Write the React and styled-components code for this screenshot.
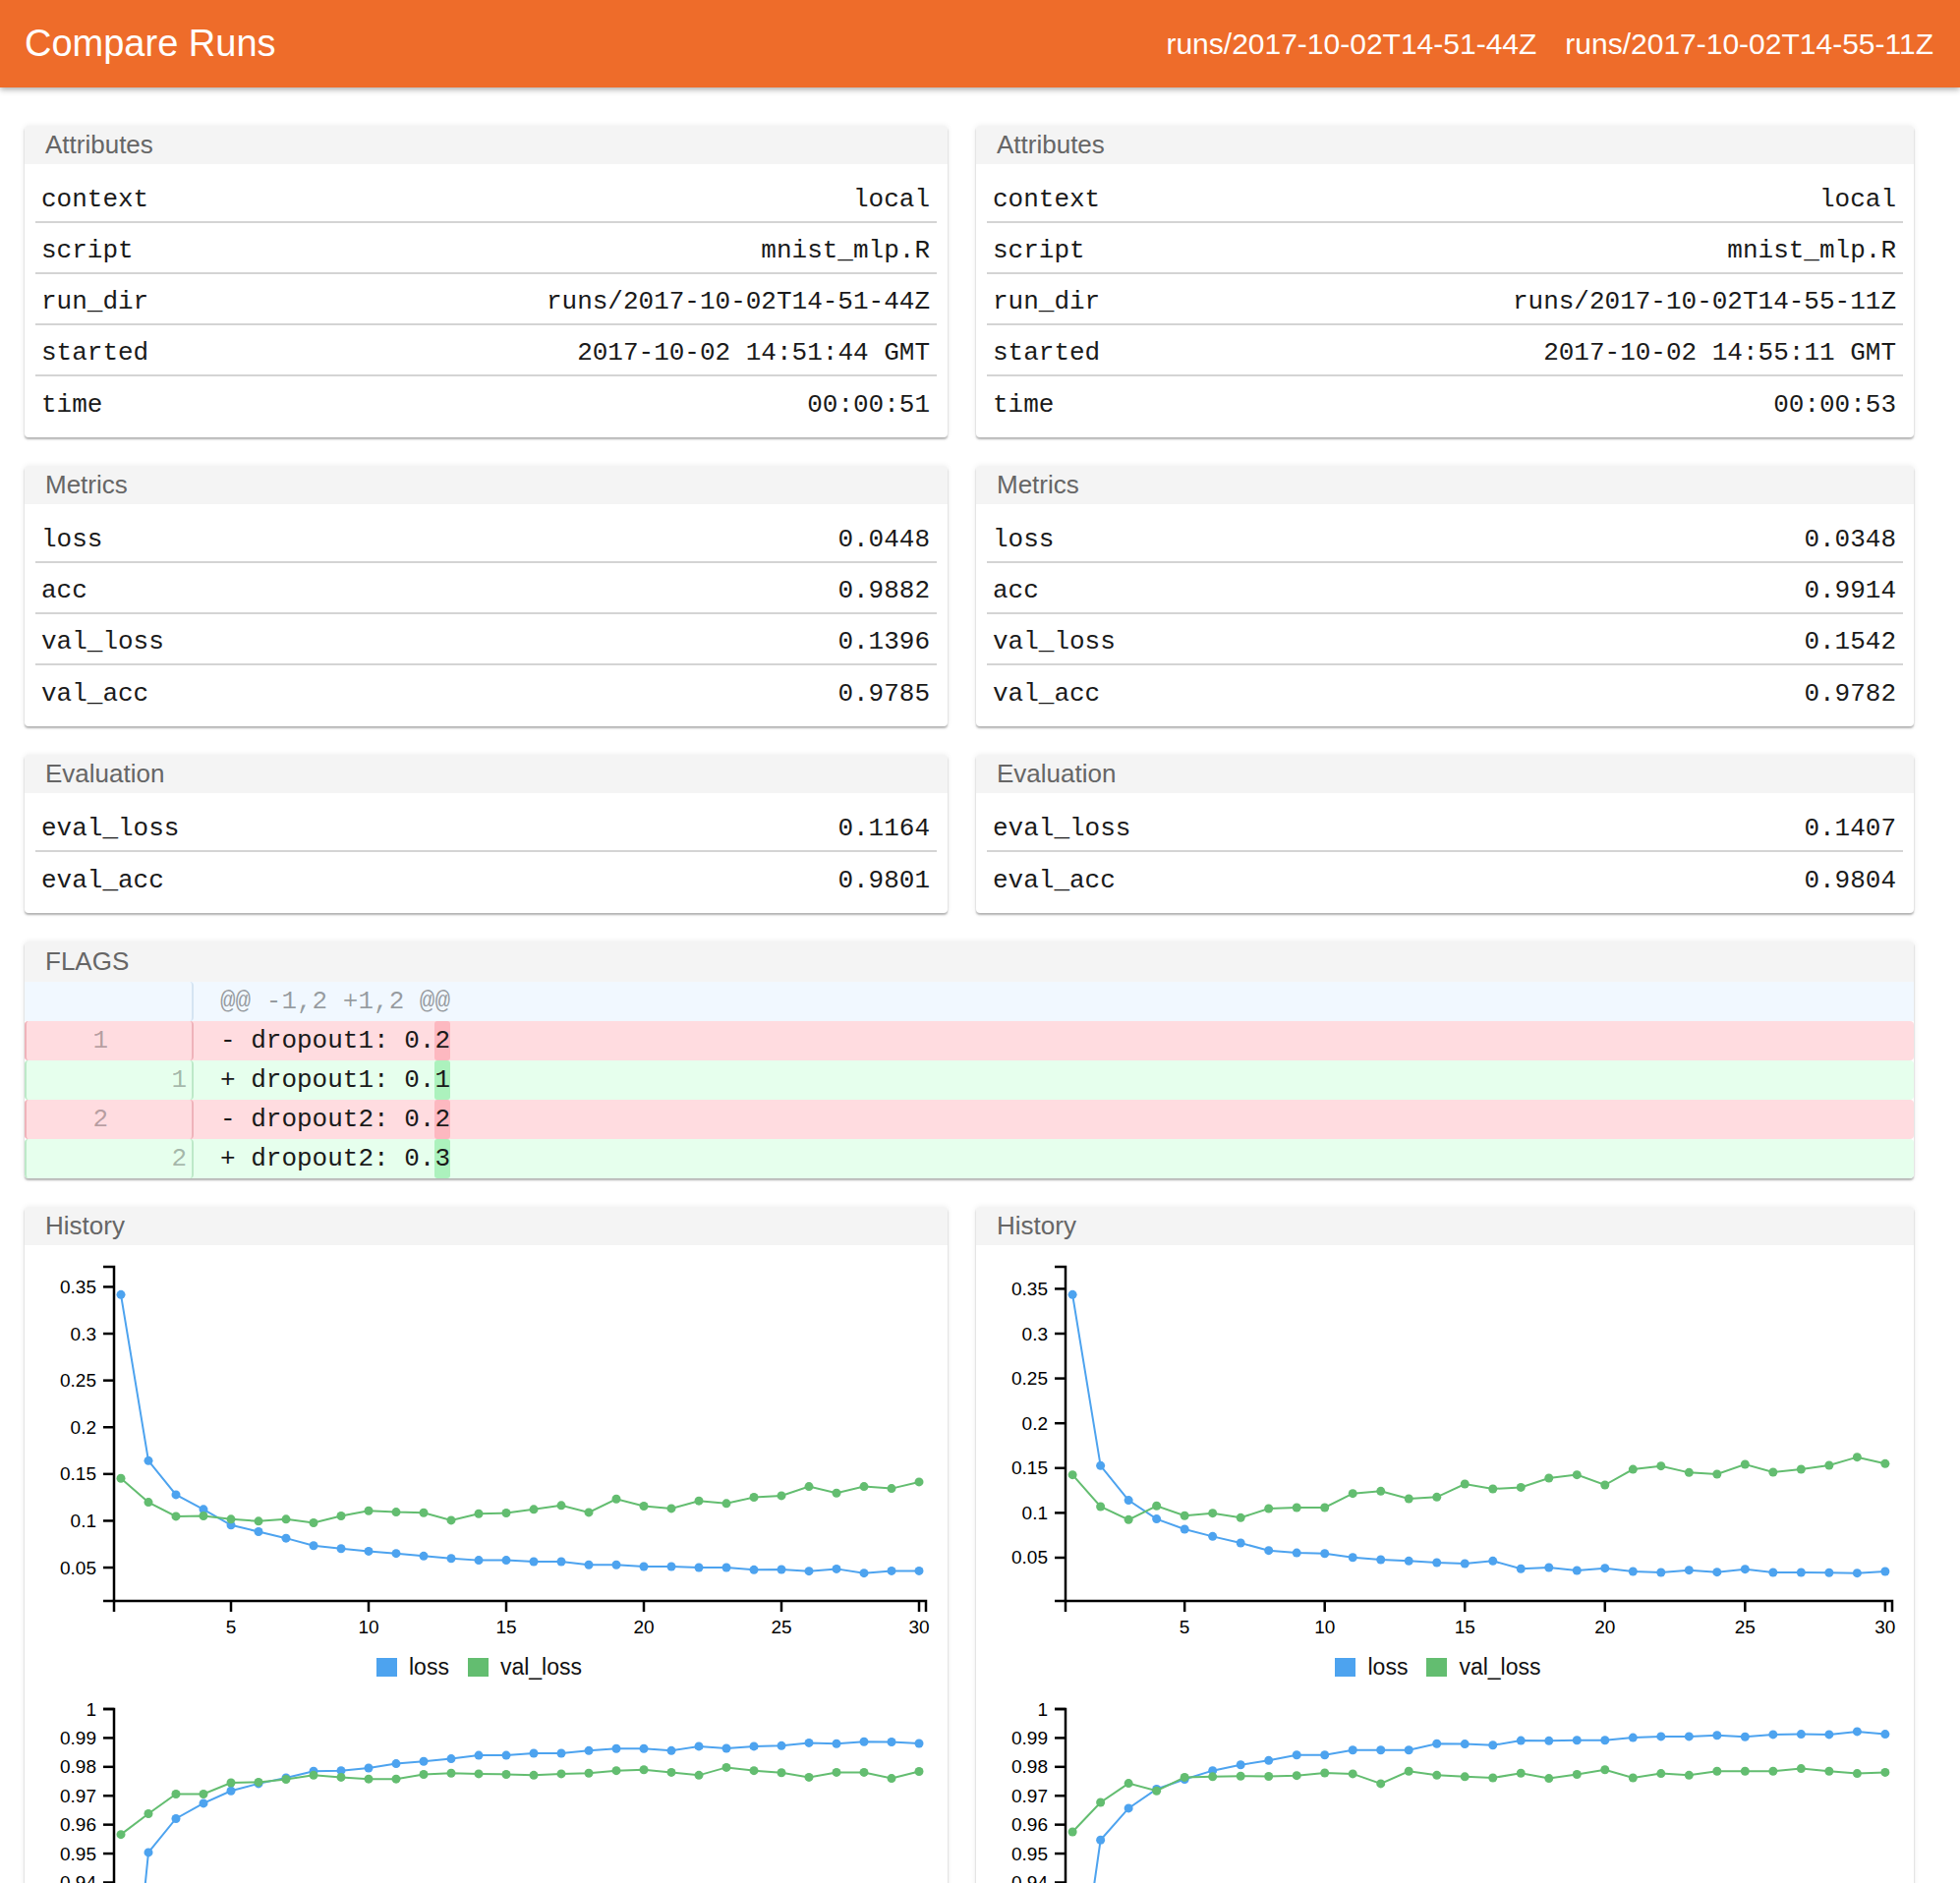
import React from 'react';
import styled, { createGlobalStyle } from 'styled-components';

const SANS = `"Liberation Sans", Helvetica, Arial, sans-serif`;
const MONO = `"Liberation Mono", "Courier New", monospace`;
const BLUE = '#4da3ef';
const GREEN = '#63bd70';
const COLS = [939, 954];

const GlobalStyle = createGlobalStyle`
  *, *:before, *:after { box-sizing: border-box; }
  body {
    margin: 0;
    background: #fff;
    font-family: ${SANS};
    color: #111;
  }
`;

const TopBar = styled.header`
  position: relative;
  z-index: 1;
  display: flex;
  align-items: center;
  justify-content: space-between;
  height: 89px;
  padding: 0 27px 0 25px;
  background: #ee6c2a;
  color: #fff;
  box-shadow: 0 2px 6px rgba(0,0,0,.35);
`;
const Title = styled.h1`
  margin: 0;
  font-size: 38px;
  font-weight: 400;
`;
const RunList = styled.div`
  display: flex;
  gap: 29px;
  font-size: 30px;
`;

const Page = styled.main`
  display: grid;
  grid-template-columns: ${COLS[0]}px ${COLS[1]}px;
  gap: 29px;
  padding: 39px 0 40px 25px;
`;

const Card = styled.section`
  grid-column: ${p => (p.$wide ? '1 / -1' : 'auto')};
  background: #fff;
  border-radius: 4px;
  overflow: hidden;
  box-shadow: 0 2px 2px rgba(0,0,0,.28), 0 0 6px rgba(0,0,0,.08);
`;
const CardTitle = styled.div`
  height: ${p => (p.$tall ? 41 : 39)}px;
  line-height: ${p => (p.$tall ? 41 : 39)}px;
  padding: 0 21px;
  background: #f4f4f4;
  color: #666;
  font-size: 26px;
`;

const KVTable = styled.div`
  padding: 8px 11px 10px;
`;
const KVRow = styled.div`
  display: flex;
  align-items: center;
  justify-content: space-between;
  height: 52px;
  padding: 6px 7px 0 6px;
  border-bottom: 2px solid #d4d4d4;
  font-family: ${MONO};
  font-size: 26px;
  color: #1a1a1a;

  &:last-child {
    border-bottom: none;
  }
`;

const DIFF = {
  info: { bg: '#f1f8ff', left: 'transparent', right: '#d5e4f2', mark: 'transparent' },
  del: { bg: '#ffdce0', left: '#efb3ba', right: '#efb3ba', mark: '#fdb8c0' },
  ins: { bg: '#e6ffed', left: '#bde9c8', right: '#bde9c8', mark: '#acf2bd' },
};

const DiffBody = styled.div`
  font-family: ${MONO};
  font-size: 26px;
  line-height: 40px;
`;
const DiffRow = styled.div`
  display: flex;
  height: 40px;
  background: ${p => DIFF[p.$kind].bg};
  border-radius: ${p => (p.$kind === 'info' ? 0 : 4)}px;
`;
const Gutter = styled.div`
  flex: none;
  display: flex;
  justify-content: flex-end;
  width: 172px;
  padding-right: 5px;
  border-left: 2px solid ${p => DIFF[p.$kind].left};
  border-right: 2px solid ${p => DIFF[p.$kind].right};
  border-radius: 4px;
  color: rgba(0,0,0,.3);
`;
const LineNo = styled.span`
  width: 80px;
  text-align: right;
`;
const Code = styled.div`
  padding-left: 27px;
  white-space: pre;
  color: ${p => (p.$kind === 'info' ? 'rgba(0,0,0,.38)' : '#1a1a1a')};
`;
const Change = styled.span`
  display: inline-block;
  height: 40px;
  background: ${p => DIFF[p.$kind].mark};
  border-radius: 3px;
`;

const Legend = styled.div`
  display: flex;
  justify-content: center;
  gap: 19px;
  height: 50px;
  padding: 20px 14px 0 0;
  font-size: 23px;
  line-height: 19px;
`;
const LegendItem = styled.div`
  display: flex;
  align-items: flex-start;
  gap: 12px;
`;
const Swatch = styled.span`
  width: 21px;
  height: 19px;
  background: ${p => p.$color};
`;

const runs = [
  {
    attrs: [
      ['context', 'local'],
      ['script', 'mnist_mlp.R'],
      ['run_dir', 'runs/2017-10-02T14-51-44Z'],
      ['started', '2017-10-02 14:51:44 GMT'],
      ['time', '00:00:51'],
    ],
    metrics: [['loss', '0.0448'], ['acc', '0.9882'], ['val_loss', '0.1396'], ['val_acc', '0.9785']],
    evaluation: [['eval_loss', '0.1164'], ['eval_acc', '0.9801']],
    history: {
      loss: [0.3417, 0.1642, 0.1279, 0.1122, 0.0954, 0.0884, 0.0814, 0.0734, 0.0703, 0.0675, 0.0651, 0.0623, 0.0598, 0.0578, 0.0578, 0.0563, 0.0563, 0.053, 0.053, 0.0511, 0.0511, 0.05, 0.05, 0.0476, 0.0479, 0.0462, 0.0486, 0.0441, 0.0465, 0.0465],
      val_loss: [0.1454, 0.1198, 0.1048, 0.1052, 0.1017, 0.0996, 0.1017, 0.0978, 0.1052, 0.1107, 0.1093, 0.1086, 0.1006, 0.1076, 0.1083, 0.1122, 0.1164, 0.109, 0.1233, 0.1157, 0.1132, 0.1213, 0.1185, 0.1251, 0.1268, 0.1366, 0.1296, 0.1366, 0.1345, 0.1415],
      acc: [0.856, 0.9504, 0.9621, 0.9674, 0.9717, 0.9742, 0.9762, 0.9785, 0.9787, 0.9796, 0.9811, 0.9819, 0.9828, 0.984, 0.984, 0.9847, 0.9847, 0.9856, 0.9863, 0.9863, 0.9856, 0.9871, 0.9864, 0.9871, 0.9873, 0.9883, 0.988, 0.9887, 0.9886, 0.9881],
      val_acc: [0.9566, 0.9638, 0.9706, 0.9706, 0.9745, 0.9747, 0.9757, 0.9771, 0.9764, 0.9758, 0.9758, 0.9774, 0.9778, 0.9776, 0.9774, 0.9771, 0.9776, 0.9778, 0.9787, 0.979, 0.9781, 0.9771, 0.9798, 0.9787, 0.978, 0.9764, 0.9781, 0.9781, 0.976, 0.9784],
    },
  },
  {
    attrs: [
      ['context', 'local'],
      ['script', 'mnist_mlp.R'],
      ['run_dir', 'runs/2017-10-02T14-55-11Z'],
      ['started', '2017-10-02 14:55:11 GMT'],
      ['time', '00:00:53'],
    ],
    metrics: [['loss', '0.0348'], ['acc', '0.9914'], ['val_loss', '0.1542'], ['val_acc', '0.9782']],
    evaluation: [['eval_loss', '0.1407'], ['eval_acc', '0.9804']],
    history: {
      loss: [0.3435, 0.1527, 0.114, 0.0932, 0.0818, 0.0737, 0.0664, 0.058, 0.0554, 0.0547, 0.0503, 0.0478, 0.0463, 0.0445, 0.0434, 0.0463, 0.0376, 0.039, 0.0357, 0.0383, 0.0346, 0.0335, 0.0361, 0.0339, 0.0372, 0.0335, 0.0335, 0.0332, 0.0328, 0.0346],
      val_loss: [0.1425, 0.107, 0.0924, 0.1078, 0.0968, 0.0997, 0.0946, 0.1048, 0.1059, 0.1059, 0.1216, 0.1242, 0.1158, 0.1176, 0.1322, 0.1267, 0.1285, 0.1388, 0.1425, 0.1311, 0.1486, 0.1523, 0.145, 0.1432, 0.1541, 0.1454, 0.1487, 0.153, 0.1622, 0.1549],
      acc: [0.887, 0.9547, 0.9657, 0.9723, 0.9757, 0.9787, 0.9807, 0.9822, 0.9841, 0.9841, 0.9858, 0.9858, 0.9858, 0.988, 0.9879, 0.9875, 0.9891, 0.989, 0.9892, 0.9892, 0.9901, 0.9905, 0.9905, 0.9909, 0.9904, 0.9912, 0.9913, 0.9912, 0.9922, 0.9913],
      val_acc: [0.9575, 0.9677, 0.9743, 0.9717, 0.9764, 0.9766, 0.9768, 0.9767, 0.977, 0.9779, 0.9776, 0.9742, 0.9785, 0.9771, 0.9766, 0.9762, 0.9778, 0.976, 0.9774, 0.979, 0.9762, 0.9777, 0.9771, 0.9785, 0.9785, 0.9785, 0.9794, 0.9785, 0.9777, 0.9781],
    },
  },
];

const flagDiff = [
  { kind: 'info', text: '@@ -1,2 +1,2 @@' },
  { kind: 'del', old: 1, text: '- dropout1: 0.', change: '2' },
  { kind: 'ins', neu: 1, text: '+ dropout1: 0.', change: '1' },
  { kind: 'del', old: 2, text: '- dropout2: 0.', change: '2' },
  { kind: 'ins', neu: 2, text: '+ dropout2: 0.', change: '3' },
];

const fmt = v => v.toFixed(2).replace(/\.?0+$/, '');

// c3-style line chart: y domain padded by 10% unless given
function Chart({ width, series, domain, step }) {
  const ML = 91, MR = 22, MT = 22, PH = 340, TICK = 11;
  const PW = width - ML - MR;
  let lo, hi;
  if (domain) {
    [lo, hi] = domain;
  } else {
    const all = series.flatMap(s => s.values);
    const min = Math.min(...all), max = Math.max(...all);
    const pad = (max - min) * 0.1;
    lo = min - pad;
    hi = max + pad;
  }
  const x = e => ML + ((e - 0.75) / 29.5) * PW;
  const y = v => MT + ((hi - v) / (hi - lo)) * PH;
  const base = MT + PH;

  const yTicks = [];
  for (let v = Math.ceil(lo / step - 1e-6) * step; v <= hi + 1e-9; v += step) {
    yTicks.push(Math.round(v * 1000) / 1000);
  }
  const xTicks = [5, 10, 15, 20, 25, 30];

  return (
    <div>
      <svg width={width} height={400} style={{ display: 'block' }}>
        <g stroke="#000" strokeWidth="2.5" fill="none">
          <path d={`M${ML - TICK},${MT}H${ML}V${base}H${ML - TICK}`} />
          <path d={`M${ML},${base + TICK}V${base}H${ML + PW}V${base + TICK}`} />
          {yTicks.map(v => (
            <line key={v} x1={ML - TICK} x2={ML} y1={y(v)} y2={y(v)} />
          ))}
          {xTicks.map(e => (
            <line key={e} x1={x(e)} x2={x(e)} y1={base} y2={base + TICK} />
          ))}
        </g>
        <g fontFamily={SANS} fontSize="19" fill="#000">
          {yTicks.map(v => (
            <text key={v} x={ML - 18} y={y(v)} textAnchor="end" dominantBaseline="central">
              {fmt(v)}
            </text>
          ))}
          {xTicks.map(e => (
            <text key={e} x={x(e)} y={base + 33} textAnchor="middle">{e}</text>
          ))}
        </g>
        {series.map(s => (
          <g key={s.name} fill={s.color}>
            <polyline
              fill="none"
              stroke={s.color}
              strokeWidth="2"
              points={s.values.map((v, i) => `${x(i + 1)},${y(v)}`).join(' ')}
            />
            {s.values.map((v, i) => (
              <circle key={i} cx={x(i + 1)} cy={y(v)} r="4.5" />
            ))}
          </g>
        ))}
      </svg>
      <Legend>
        {series.map(s => (
          <LegendItem key={s.name}>
            <Swatch $color={s.color} />
            {s.name}
          </LegendItem>
        ))}
      </Legend>
    </div>
  );
}

function KVCard({ title, rows }) {
  return (
    <Card>
      <CardTitle>{title}</CardTitle>
      <KVTable>
        {rows.map(([k, v]) => (
          <KVRow key={k}>
            <span>{k}</span>
            <span>{v}</span>
          </KVRow>
        ))}
      </KVTable>
    </Card>
  );
}

function FlagsCard() {
  return (
    <Card $wide>
      <CardTitle $tall>FLAGS</CardTitle>
      <DiffBody>
        {flagDiff.map((line, i) => (
          <DiffRow key={i} $kind={line.kind}>
            <Gutter $kind={line.kind}>
              <LineNo>{line.old || ''}</LineNo>
              <LineNo>{line.neu || ''}</LineNo>
            </Gutter>
            <Code $kind={line.kind}>
              {line.text}
              {line.change && <Change $kind={line.kind}>{line.change}</Change>}
            </Code>
          </DiffRow>
        ))}
      </DiffBody>
    </Card>
  );
}

function HistoryCard({ width, history }) {
  return (
    <Card>
      <CardTitle>History</CardTitle>
      <Chart
        width={width}
        step={0.05}
        series={[
          { name: 'loss', color: BLUE, values: history.loss },
          { name: 'val_loss', color: GREEN, values: history.val_loss },
        ]}
      />
      <Chart
        width={width}
        step={0.01}
        domain={[0.8844, 1]}
        series={[
          { name: 'acc', color: BLUE, values: history.acc },
          { name: 'val_acc', color: GREEN, values: history.val_acc },
        ]}
      />
    </Card>
  );
}

export default function App() {
  return (
    <>
      <GlobalStyle />
      <TopBar>
        <Title>Compare Runs</Title>
        <RunList>
          <span>runs/2017-10-02T14-51-44Z</span>
          <span>runs/2017-10-02T14-55-11Z</span>
        </RunList>
      </TopBar>
      <Page>
        {runs.map((r, i) => <KVCard key={`a${i}`} title="Attributes" rows={r.attrs} />)}
        {runs.map((r, i) => <KVCard key={`m${i}`} title="Metrics" rows={r.metrics} />)}
        {runs.map((r, i) => <KVCard key={`e${i}`} title="Evaluation" rows={r.evaluation} />)}
        <FlagsCard />
        {runs.map((r, i) => <HistoryCard key={`h${i}`} width={COLS[i]} history={r.history} />)}
      </Page>
    </>
  );
}
